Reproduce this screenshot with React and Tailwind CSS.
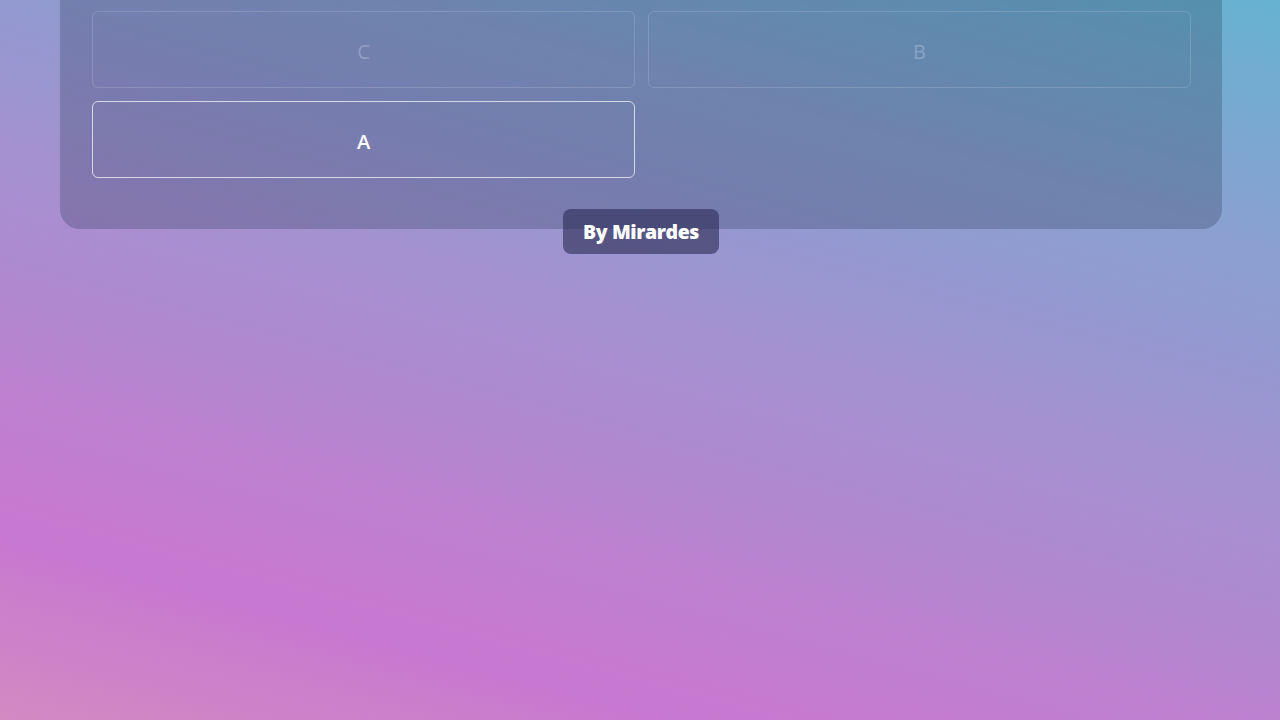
export default function App() {
  return (
    <div className="min-h-screen w-full bg-[linear-gradient(195deg,#66b2d0_0%,#8aa0d0_23%,#9598d0_35%,#a690d0_48%,#b088d0_60%,#bf80d0_70%,#c878d0_83%,#d28ac2_100%)] font-['Open_Sans',sans-serif]">
      <div className="ml-[60px] w-[1162px]">
        <div className="rounded-b-[20px] bg-[#1c2a48]/25 pt-[11px] pr-[31px] pb-[51px] pl-[32px]">
          <div className="grid grid-cols-2 gap-[13px]">
            <button className="h-[77px] rounded-[6px] border border-white/15 pt-[4px] text-[20px] font-medium text-white/25">C</button>
            <button className="h-[77px] rounded-[6px] border border-white/15 pt-[4px] text-[20px] font-medium text-white/25">B</button>
            <button className="h-[77px] rounded-[6px] border border-white/70 pt-[4px] text-[20px] font-semibold text-white">A</button>
          </div>
        </div>
        <div className="-mt-[20px] flex justify-center">
          <span className="relative flex h-[45px] w-[156px] items-center justify-center rounded-[8px] bg-[#2a2a52]/60 text-[19.5px] font-extrabold tracking-[-0.4px] text-white">
            By Mirardes
          </span>
        </div>
      </div>
    </div>
  );
}
